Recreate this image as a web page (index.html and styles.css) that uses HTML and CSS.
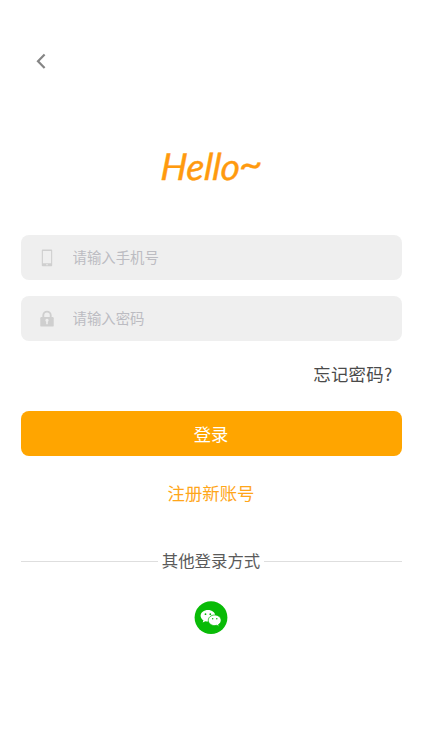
FILE: index.html
```
<!DOCTYPE html>
<html lang="zh-CN">
<head>
	<meta charset="UTF-8">
	<meta name="viewport" content="width=device-width, initial-scale=1">
	<title>登录</title>
	<link rel="stylesheet" href="styles.css">
</head>
<body>
	<div class="login">
		<a class="back" href="#">
			<svg width="12" height="18" viewBox="0 0 12 18"><path d="M9.6 2.4L3 9.2l6.600 6.800" fill="none" stroke="#858585" stroke-width="2.2"/></svg>
		</a>
		<h1 class="hello"><span>Hello<i>~</i></span></h1>
		<form class="form">
			<label class="field">
				<svg class="icon" width="14" height="18" viewBox="0 0 14 18">
					<path fill="#cfcfcf" fill-rule="evenodd" d="M2.6 .5h8.800q.8 0 .8.8v15.200q0 .8-.8.8H2.600q-.8 0-.8-.8V1.300q0-.8.8-.8zM2.900 2v12.200h8.200V2zM6.200 15.200v1h1.600v-1z"/>
				</svg>
				<input type="text" placeholder="请输入手机号">
			</label>
			<label class="field">
				<svg class="icon" width="14" height="18" viewBox="0 0 14 18">
					<path d="M3.300 8V5.300a3.700 3.700 0 0 1 7.400 0V8" fill="none" stroke="#cfcfcf" stroke-width="1.900"/>
					<rect x=".3" y="7" width="13.400" height="9.600" rx="1.200" fill="#cfcfcf"/>
					<path d="M7 8.800a1.600 1.600 0 0 1 .8 3v2.400H6.200v-2.400a1.600 1.600 0 0 1 .8-3z" fill="#efefef"/>
				</svg>
				<input type="password" placeholder="请输入密码">
			</label>
			<a class="forget" href="#">忘记密码?</a>
			<button class="submit" type="button">登录</button>
		</form>
		<a class="register" href="#">注册新账号</a>
		<div class="other"><span>其他登录方式</span></div>
		<a class="wechat" href="#">
			<svg width="34" height="34" viewBox="0 0 34 34">
				<circle cx="17" cy="16.600" r="16.400" fill="#09bb07"/>
				<path d="M14 9c-4.100 0-7.400 2.600-7.400 5.800 0 1.900 1.100 3.500 2.800 4.500l-.7 2.300 2.700-1.400c.8.2 1.700.3 2.600.3 4 0 7.300-2.500 7.300-5.700S18 9 14 9z" fill="#fff"/>
				<path d="M20.700 14c-3.600 0-6.400 2.400-6.400 5.300s2.800 5.300 6.400 5.300c.7 0 1.400-.1 2.100-.3l2.300 1.200-.6-2c1.600-.9 2.600-2.400 2.600-4.200 0-2.900-2.800-5.300-6.400-5.300z" fill="#fff" stroke="#09bb07" stroke-width=".8"/>
				<g fill="#09bb07">
					<circle cx="11.500" cy="13.200" r=".9"/>
					<circle cx="16.300" cy="13.200" r=".9"/>
					<circle cx="18.700" cy="17.800" r=".75"/>
					<circle cx="22.800" cy="17.800" r=".75"/>
				</g>
			</svg>
		</a>
	</div>
</body>
</html>
```
FILE: styles.css
```
*{
	box-sizing: border-box;
	margin: 0;
	padding: 0;
}
body{
	background: #fff;
	font-family: "Noto Sans CJK SC", sans-serif;
	color: #4a4a4a;
}
a{
	color: inherit;
	text-decoration: none;
}
svg{
	display: block;
}
.login{
	display: flex;
	flex-direction: column;
	width: 422px;
	height: 750px;
	padding: 52px 20.5px 0;
}
.back{
	width: 12px;
	margin-left: 14px;
}
.hello{
	height: 60px;
	margin-top: 66px;
	line-height: 60px;
	text-align: center;
	color: #ff9a0e;
	font-family: Lato, sans-serif;
	font-size: 37px;
	font-style: italic;
	font-weight: 400;
	-webkit-text-stroke: .4px #ff9a0e;
}
.hello span{
	display: inline-block;
	transform: skewX(-4deg);
}
.hello i{
	display: inline-block;
	transform: translateY(-3px) scaleX(1.1);
}
.form{
	display: flex;
	flex-direction: column;
	margin-top: 38.500px;
}
.field{
	display: flex;
	align-items: center;
	height: 45.500px;
	margin-bottom: 15.500px;
	padding-left: 19px;
	border-radius: 8px;
	background: #efefef;
}
.icon{
	margin-top: 1px;
}
.field input{
	flex: 1;
	min-width: 0;
	height: 30px;
	margin: -2px 0 0 19px;
	border: none;
	outline: none;
	background: none;
	font: 14.400px "Noto Sans CJK SC", sans-serif;
}
.field input::placeholder{
	color: #bcbcc2;
}
.forget{
	align-self: flex-end;
	height: 34px;
	margin: 0 9px 20px 0;
	line-height: 34px;
	font-size: 17.400px;
	letter-spacing: .3px;
}
.submit{
	height: 45.500px;
	border: none;
	border-radius: 8px;
	background: #ffa500;
	color: #fff;
	font: 17.300px "Noto Sans CJK SC", sans-serif;
}
.register{
	align-self: center;
	margin-top: 22px;
	height: 30px;
	line-height: 30px;
	font-size: 17.400px;
	color: #ffa61a;
}
.other{
	display: flex;
	align-items: center;
	gap: 4px;
	height: 30px;
	margin-top: 38px;
	line-height: 26px;
	font-size: 16.400px;
	color: #5a5a5a;
}
.other span{
	padding-bottom: 3px;
}
.other::before,
.other::after{
	content: "";
	flex: 1;
	height: 1px;
	background: #dedede;
}
.wechat{
	align-self: center;
	margin-top: 24.500px;
}
```
